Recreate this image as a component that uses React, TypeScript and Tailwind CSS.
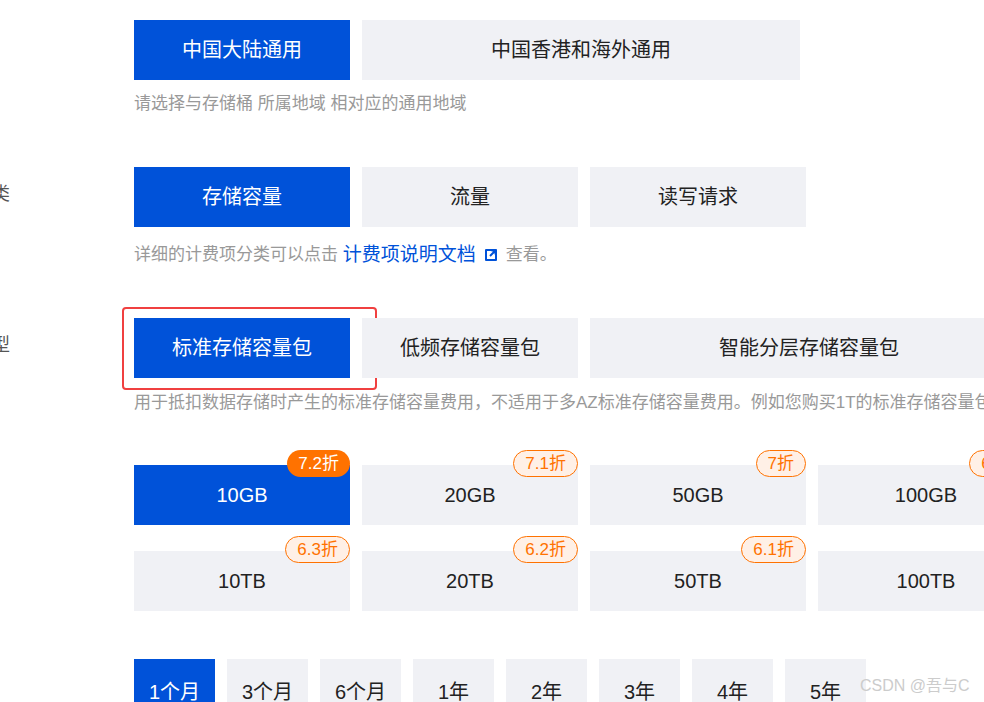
const F = { fontFamily: '"Liberation Sans","Noto Sans CJK SC",sans-serif' };

function Btn({ t, active, w = "w-[216px]", badge, badgeActive }: { t: string; active?: boolean; w?: string; badge?: string; badgeActive?: boolean }) {
  return (
    <div className={`relative shrink-0 ${w} h-[60px] flex items-center justify-center text-[20px] ${active ? "bg-[#0052d9] text-white" : "bg-[#f0f1f5] text-[#222]"}`}>
      {t}
      {badge && (
        <span className={`absolute right-0 top-[-15px] h-[27px] px-[11px] rounded-full flex items-center text-[17px] ${badgeActive ? "bg-[#ff7200] text-white" : "bg-[#fff0e6] text-[#ff7200] border border-[#ff7200]"}`}>{badge}</span>
      )}
    </div>
  );
}

function Row({ label, children }: { label?: string; children: React.ReactNode }) {
  return (
    <div className="flex h-[60px]">
      <div className="w-[134px] shrink-0 relative">
        {label && <span className="absolute left-[-8px] top-[14px] text-[18px] text-[#555]">{label}</span>}
      </div>
      <div className="flex gap-3">{children}</div>
    </div>
  );
}

export default function App() {
  return (
    <div style={F} className="w-[984px] h-[702px] overflow-hidden bg-white relative">
      <div className="pt-5">
        <Row>
          <Btn t="中国大陆通用" active />
          <Btn t="中国香港和海外通用" w="w-[438px]" />
        </Row>
        <div className="pl-[134px] mt-[12px] text-[17px] text-[#999] h-6 leading-6 whitespace-nowrap">请选择与存储桶 所属地域 相对应的通用地域</div>
        <div className="mt-[51px]">
          <Row label="类">
            <Btn t="存储容量" active />
            <Btn t="流量" />
            <Btn t="读写请求" />
          </Row>
        </div>
        <div className="pl-[134px] mt-[16px] text-[17px] text-[#999] h-6 leading-6 flex items-center whitespace-nowrap">
          详细的计费项分类可以点击&nbsp;<span className="text-[#0052d9] text-[19px]">计费项说明文档</span>
          <svg width="14" height="14" viewBox="0 0 14 14" className="mx-[8px]"><rect x="1" y="1" width="12" height="12" rx="1" fill="#0052d9" /><rect x="3" y="3" width="8" height="8" fill="white" /><path d="M6 8 L11 3 M7.5 2.5 H11.5 V6.5" stroke="#0052d9" strokeWidth="2" fill="none" /></svg>
          查看。
        </div>
        <div className="mt-[51px] relative">
          <div className="absolute left-[122px] top-[-11px] w-[255px] h-[83px] border-2 border-[#f04040] rounded-[4px]" />
          <Row label="型">
            <Btn t="标准存储容量包" active />
            <Btn t="低频存储容量包" />
            <Btn t="智能分层存储容量包" w="w-[438px]" />
          </Row>
        </div>
        <div className="pl-[134px] mt-[13px] text-[17px] text-[#999] h-6 leading-6 whitespace-nowrap">用于抵扣数据存储时产生的标准存储容量费用，不适用于多AZ标准存储容量费用。例如您购买1T的标准存储容量包</div>
        <div className="mt-[50px]">
          <Row>
            <Btn t="10GB" active badge="7.2折" badgeActive />
            <Btn t="20GB" badge="7.1折" />
            <Btn t="50GB" badge="7折" />
            <Btn t="100GB" badge="6.9折" />
          </Row>
        </div>
        <div className="mt-[26px]">
          <Row>
            <Btn t="10TB" badge="6.3折" />
            <Btn t="20TB" badge="6.2折" />
            <Btn t="50TB" badge="6.1折" />
            <Btn t="100TB" badge="6折" />
          </Row>
        </div>
        <div className="mt-[48px]">
          <Row>
            {["1个月", "3个月", "6个月", "1年", "2年", "3年", "4年", "5年"].map((t, i) => (
              <div key={t} className={`w-[81px] h-[60px] shrink-0 flex justify-center pt-[18px] text-[20px] ${i === 0 ? "bg-[#0052d9] text-white" : "bg-[#f0f1f5] text-[#222]"}`}>{t}</div>
            ))}
          </Row>
        </div>
      </div>
      <div className="absolute left-[860px] top-[674px] text-[16px] text-[#ccc]">CSDN @吾与C</div>
    </div>
  );
}
